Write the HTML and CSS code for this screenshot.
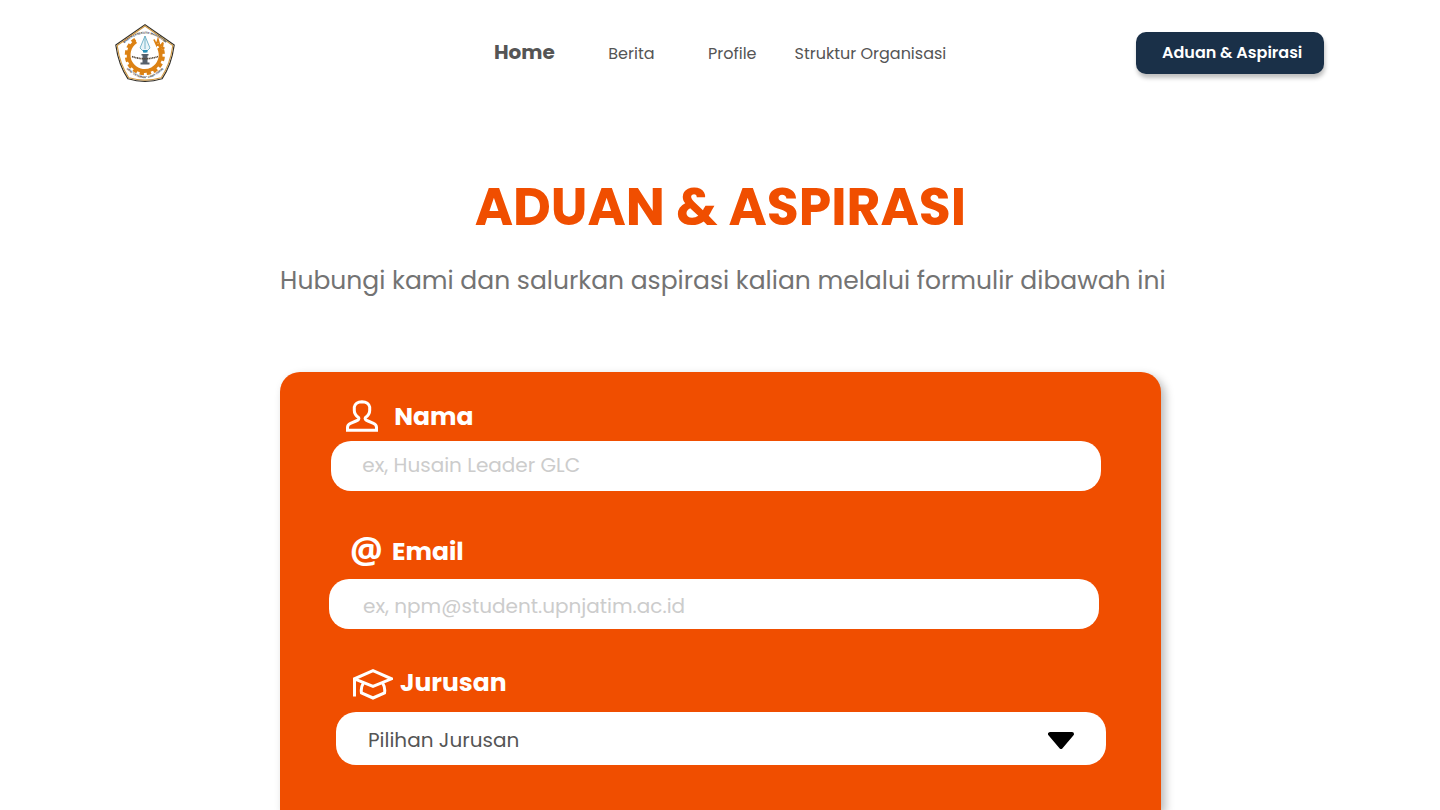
FILE: index.html
```html
<!DOCTYPE html>
<html lang="id">
<head>
<meta charset="utf-8">
<title>Aduan &amp; Aspirasi</title>
<link rel="stylesheet" href="styles.css">
</head>
<body>
<header class="topbar">
  <a class="brand" href="#" aria-label="Beranda">
    <svg class="logo" viewBox="0 0 60 58">
      <defs>
        <path id="arc-top" d="M6 22.500 Q30 -3 54 22.500"/>
        <path id="arc-bottom" d="M8 41 Q30 67.500 52 41"/>
      </defs>
      <path d="M30 .7 L59.200 21 Q56.500 41 47 54.800 Q30 60 13 54.800 Q3.500 41 .8 21 Z" fill="#fff" stroke="#33302a" stroke-width="1.200" stroke-linejoin="round"/>
      <path d="M30 2 L57.800 21.600 Q55.200 40.500 46.200 53.700 Q30 58.600 13.800 53.700 Q4.800 40.500 2.200 21.600 Z" fill="none" stroke="#d09a45" stroke-width="1.100"/>
      <path d="M21 17.500 A16 16 0 1 0 44 24" fill="none" stroke="#dc8214" stroke-width="3.800"/>
      <path d="M20.300 15.500 A18.300 18.300 0 1 0 46.500 23.500" fill="none" stroke="#dc8214" stroke-width="3.600" stroke-dasharray="4.200 2.800"/>
      <path d="M39 15.500 l2.500 5.500 1.500-5.500 2 7 3-4 -1 6.500 2.500-1.500 M41 18 l4 5 M43 25 l4-2" fill="none" stroke="#dc8214" stroke-width="1.700"/>
      <path d="M30 12 l-5 12 4 4 h2 l4-4 Z M30 12 v13" fill="#e8f4f8" stroke="#6aaec5" stroke-width=".9"/>
      <path d="M28 26h4.500v2.500h-4.500z" fill="#2890b8"/>
      <path d="M26.500 30h7v1.500h-1v7h2v2h-9v-2h2v-7h-1z" fill="#56606a"/>
      <path d="M17 32.500 Q30 37 43 32.500" fill="none" stroke="#55483a" stroke-width="1.600" stroke-dasharray="1.200 .5"/>
      <text class="logo-text"><textPath href="#arc-top" startOffset="50%">BADAN EKSEKUTIF MAHASISWA</textPath></text>
      <text class="logo-text"><textPath href="#arc-bottom" startOffset="50%">UPN "VETERAN" JAWA TIMUR</textPath></text>
    </svg>
  </a>
  <nav class="menu">
    <a class="menu-home" href="#">Home</a>
    <a class="menu-berita" href="#">Berita</a>
    <a class="menu-profile" href="#">Profile</a>
    <a class="menu-struktur" href="#">Struktur Organisasi</a>
  </nav>
  <a class="cta" href="#">Aduan &amp; Aspirasi</a>
</header>
<main class="page">
  <h1 class="title">ADUAN &amp; ASPIRASI</h1>
  <p class="subtitle">Hubungi kami dan salurkan aspirasi kalian melalui formulir dibawah ini</p>
  <form class="card">
    <div class="field field-nama">
      <div class="label">
        <svg class="icon-user" viewBox="0 0 32 32"><path d="M1.500 30.300 V27.500 Q1.500 24.500 4.500 23.300 L10 21 Q14 19.500 12.500 17.500 Q8.300 14.500 8.300 10.500 V7 Q9.500 2 16 1.800 Q22.500 2 23.700 7 V10.500 Q23.700 14.500 19.500 17.500 Q18 19.500 22 21 L27.500 23.300 Q30.500 24.500 30.500 27.500 V30.300 Z"/></svg>
        <span>Nama</span>
      </div>
      <div class="box">ex, Husain Leader GLC</div>
    </div>
    <div class="field field-email">
      <div class="label"><span class="icon-at">@</span><span>Email</span></div>
      <div class="box">ex, npm@student.upnjatim.ac.id</div>
    </div>
    <div class="field field-jurusan">
      <div class="label">
        <svg class="icon-cap" viewBox="0 0 40 31"><path d="M1.500 27.500 V9.800 L20 1.700 L38.500 9.800 L20 17.300 L1.500 9.800 M10.500 13.700 Q7.500 18.500 8.500 24 L20 29 L31.500 24 Q32.500 18.500 29.500 13.700"/></svg>
        <span>Jurusan</span>
      </div>
      <div class="box select"><span>Pilihan Jurusan</span>
        <svg class="caret" viewBox="0 0 26 17"><path d="M2 2 H24 L13 15 Z"/></svg>
      </div>
    </div>
  </form>
</main>
</body>
</html>
```
FILE: styles.css
```css
* { box-sizing: border-box; }
body {
  margin: 0;
  height: 810px;
  overflow: hidden;
  background: #fff;
  color: #555;
  font-family: Poppins, Inter, sans-serif;
}
a { color: inherit; text-decoration: none; }
.topbar { display: flex; height: 106px; padding: 24px 116px 0 115px; }
.brand { width: 60px; height: 58px; }
.logo { display: block; width: 60px; height: 58px; }
.logo-text { font-family: "Liberation Sans", sans-serif; font-size: 2.9px; font-weight: 700; fill: #333; text-anchor: middle; }
.menu { display: flex; margin-left: 319px; font-size: 16px; line-height: 24px; padding-top: 16px; width: 642px; white-space: nowrap; }
.menu-home { width: 114.300px; font-size: 20px; font-weight: 700; }
.menu-berita { width: 99.700px; padding-top: 2px; }
.menu-profile { width: 86.500px; padding-top: 2px; }
.menu-struktur { padding-top: 2px; }
.cta { width: 188px; height: 42px; margin-top: 8px; padding-left: 26px; border-radius: 10px; background: #1a3048; color: #fff; font-size: 16px; font-weight: 600; line-height: 41px; box-shadow: 1px 4px 4px rgba(0,0,0,.25); white-space: nowrap; }
.page { padding: 0 279px 0 280px; }
.title { margin: 0; padding: 71px 0 0 194.700px; font-size: 52px; font-weight: 700; line-height: 60px; color: #f04e00; white-space: nowrap; }
.subtitle { margin: 0; padding: 24px 0 0 .1px; font-size: 25px; line-height: 40px; color: #737373; white-space: nowrap; }
.card { height: 438px; margin-top: 71px; padding-top: 28px; border-radius: 20px 20px 0 0; background: #f04e00; box-shadow: 4px 4px 10px rgba(0,0,0,.28); }
.label { display: flex; height: 32px; color: #fff; font-size: 25px; font-weight: 700; line-height: 33px; }
.box { width: 770px; height: 50px; border-radius: 20px; background: #fff; color: #ccc; font-size: 20px; line-height: 49px; }
.field-nama { height: 134px; padding-left: 51px; }
.field-nama .label { margin-bottom: 9px; padding-left: 15px; gap: 16.200px; }
.field-nama .box { padding-left: 31.300px; }
.icon-user { width: 32px; height: 32px; }
.field-email { height: 134px; padding-left: 49px; }
.field-email .label { margin-bottom: 13px; padding-left: 21px; line-height: 35px; }
.field-email .box { padding: 3px 0 0 34px; }
.icon-at { width: 42px; font-family: "Open Sans", sans-serif; font-size: 36.500px; font-weight: 700; line-height: 30px; }
.field-jurusan { padding-left: 56px; }
.field-jurusan .label { margin-bottom: 12.400px; padding-left: 17px; gap: 7px; line-height: 30px; }
.icon-cap { width: 40px; height: 31px; margin-top: .5px; }
.icon-user path, .icon-cap path { fill: none; stroke: #fff; stroke-width: 3; }
.select { display: flex; height: 52.600px; padding: 3.500px 32px 0 32px; justify-content: space-between; color: #555; }
.caret { width: 26px; height: 17px; margin-top: 16px; }
.caret path { stroke: #000; stroke-width: 4; stroke-linejoin: round; }
```
